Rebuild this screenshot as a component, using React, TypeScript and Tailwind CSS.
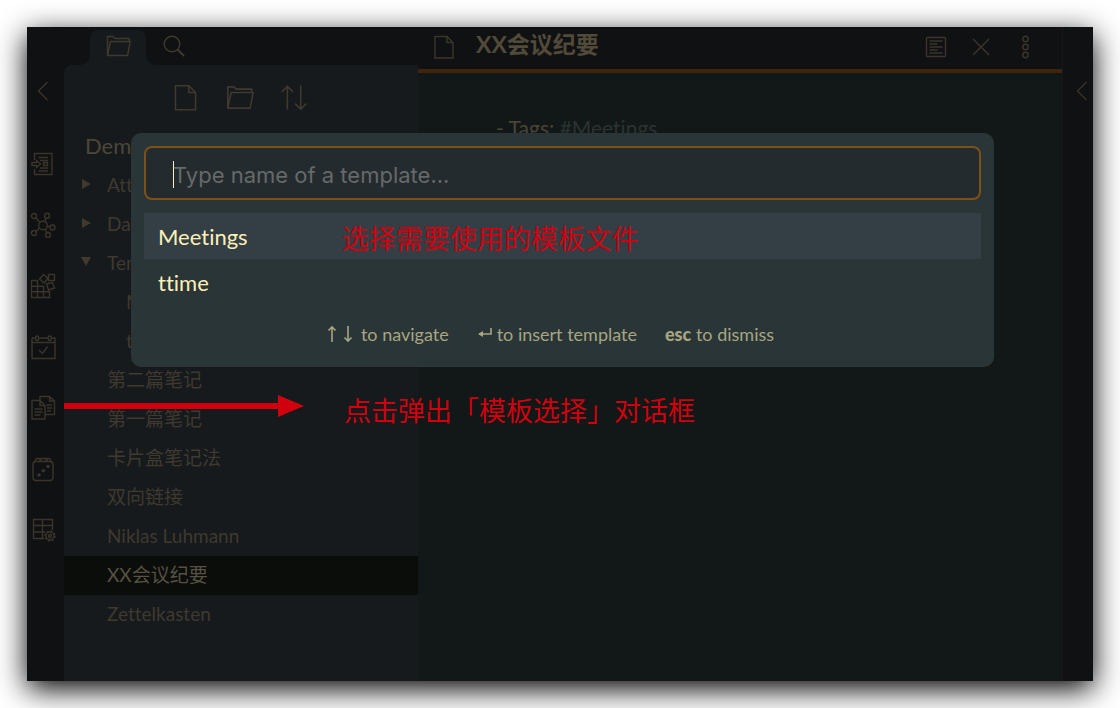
import type { ReactNode } from "react";

type IconProps = { className?: string; size?: number; children: ReactNode };

function Icon({ className = "", size = 26, children }: IconProps) {
  return (
    <svg
      aria-hidden="true"
      className={`shrink-0 ${className}`}
      width={size}
      height={size}
      viewBox="0 0 26 26"
      fill="none"
      stroke="currentColor"
      strokeWidth="1.4"
    >
      {children}
    </svg>
  );
}

const FolderPaths = () => (
  <path d="M2.500 22.500V3.500H8l2 2h14v3.500M2.500 22.500 5.500 8.500H25.300l-2.800 14H2.500Z" strokeLinejoin="round" />
);
const PagePaths = () => <path d="M4 2.500h12L22 8.500v15.500H4V2.500ZM16 2.500v6H22" />;

const ChevronIcon = () => (
  <Icon>
    <path d="M17.500 4 8.500 13l9 9" />
  </Icon>
);

const ribbonItems: { label: string; icon: ReactNode }[] = [
  {
    label: "Quick switcher",
    icon: (
      <Icon>
        <path d="M4.500 9V2.500H22v21H4.500V18M8.500 6.500h9.500M10 9.500h8M10 17h8M8.500 20h9.500" />
        <path d="M2 11.500h4.500V9.500L10.500 13l-4 3.500v-2H2v-3ZM13.500 11.500h4v3h-4z" />
      </Icon>
    ),
  },
  {
    label: "Graph view",
    icon: (
      <Icon>
        <circle cx="13" cy="13.500" r="4.300" />
        <circle cx="4" cy="4" r="2.500" />
        <circle cx="17" cy="3.700" r="2.500" />
        <circle cx="22.500" cy="15.500" r="2.500" />
        <circle cx="4" cy="21" r="2.500" />
        <circle cx="18" cy="23" r="2.500" />
        <path d="m5.800 5.800 4.200 4.700M16 6l-1.200 3.500M17.300 14.300l2.800.600M15.300 17.200l1.500 3.500M6 19.300l3.500-3" />
      </Icon>
    ),
  },
  {
    label: "Blocks",
    icon: (
      <Icon>
        <path d="M1.500 7.500h6v17h-6zM1.500 13.200h12v11.300h-12zM1.500 18.800h18v5.700h-18zM7.500 24.500v-12M13.500 24.500V13" />
        <path d="m13.500 1.500 4.500 4-4 4.500-4.500-4zM18.500 1.500h6v6h-6zM16.500 11l6-1.500 2 5.500-6 2z" />
      </Icon>
    ),
  },
  {
    label: "Daily note",
    icon: (
      <Icon>
        <path d="M2 4h3.500M9 4h9M21.500 4H25v20.500H2V4M2 8.500h23" />
        <rect x="5.500" y="2" width="3" height="4.500" rx="1.500" />
        <rect x="18.200" y="2" width="3" height="4.500" rx="1.500" />
        <path d="m9 16 3.500 3.500 5-7" />
      </Icon>
    ),
  },
  {
    label: "Insert template",
    icon: (
      <Icon>
        <path d="M10 5V1.500h9.500L24.500 6v13.500h-9M19.500 1.500V6h5M2 5.500h8l5 5V24H2V5.500ZM10 5.500v5h5" />
        <path d="M4.500 14h8M4.500 17h8M4.500 20h6M16.500 10h5.500M17 13h5M17 16h4" />
      </Icon>
    ),
  },
  {
    label: "Random note",
    icon: (
      <Icon>
        <rect x="3" y="5.500" width="20" height="19" rx="3" />
        <path d="M4 6.500 6.500 2.500h13l2.500 4" />
        <path d="M9 4h3M15 4h3" />
        <g fill="currentColor" stroke="none">
          <circle cx="18" cy="10.500" r="1.800" />
          <circle cx="13.300" cy="14.800" r="1.800" />
          <circle cx="9" cy="19" r="1.800" />
        </g>
      </Icon>
    ),
  },
  {
    label: "Table settings",
    icon: (
      <Icon>
        <path d="M14 21.500H3.500V2.500h19v10.500M3.500 8.500h19M3.500 15h12M12.500 2.500v19" />
        <circle cx="20" cy="19" r="4" />
        <circle cx="20" cy="19" r="1.500" />
        <circle cx="20" cy="19" r="5" strokeDasharray="2 1.900" />
      </Icon>
    ),
  },
];

type TreeItem = { name: string; open?: boolean; folder?: boolean; nested?: boolean; active?: boolean };

const tree: TreeItem[] = [
  { name: "Attachments", folder: true },
  { name: "Daily", folder: true },
  { name: "Templates", folder: true, open: true },
  { name: "Meetings", nested: true },
  { name: "ttime", nested: true },
  { name: "第二篇笔记" },
  { name: "第一篇笔记" },
  { name: "卡片盒笔记法" },
  { name: "双向链接" },
  { name: "Niklas Luhmann" },
  { name: "XX会议纪要", active: true },
  { name: "Zettelkasten" },
];

function Ribbon() {
  return (
    <nav aria-label="Ribbon" className="flex w-[37px] shrink-0 flex-col items-center bg-[#101113] pr-1.5 pt-[33px] text-[#3a352b]">
      <button type="button" aria-label="Collapse left sidebar" className="mb-3 flex h-[61px] items-center">
        <ChevronIcon />
      </button>
      {ribbonItems.map((item) => (
        <button key={item.label} type="button" aria-label={item.label} className="flex h-[61px] items-center">
          {item.icon}
        </button>
      ))}
    </nav>
  );
}

function Sidebar() {
  return (
    <aside className="flex w-[354px] shrink-0 flex-col bg-[#101113] text-[19px] text-[#3f392e]">
      <div className="flex items-end pl-[26px] pt-[3px]">
        <button
          type="button"
          aria-label="Files"
          className="relative flex h-[35px] w-[56px] items-center justify-center rounded-t-lg bg-[#161a1d] pb-[3px]"
        >
          <svg aria-hidden="true" className="absolute -left-3 bottom-0" width="12" height="12">
            <path d="M12 0v12H0C8 12 12 8 12 0Z" fill="#161a1d" />
          </svg>
          <svg aria-hidden="true" className="absolute -right-3 bottom-0" width="12" height="12">
            <path d="M0 0v12h12C4 12 0 8 0 0Z" fill="#161a1d" />
          </svg>
          <Icon>
            <FolderPaths />
          </Icon>
        </button>
        <button type="button" aria-label="Search" className="flex h-[35px] w-[56px] items-center justify-center pb-[3px]">
          <Icon>
            <circle cx="11" cy="11" r="7.800" />
            <path d="m16.500 16.500 6.500 6.500" strokeWidth="2" />
          </Icon>
        </button>
      </div>
      <div className="flex flex-1 flex-col rounded-tl-lg bg-[#161a1d]">
        <div className="flex h-[65px] items-center justify-center gap-[25px] pr-1">
          <button type="button" aria-label="New note">
            <Icon size={29}>
              <PagePaths />
            </Icon>
          </button>
          <button type="button" aria-label="New folder">
            <Icon size={29}>
              <FolderPaths />
            </Icon>
          </button>
          <button type="button" aria-label="Change sort order">
            <Icon size={29}>
              <path d="M7.500 24V3M2.500 8l5-5 5 5M19.500 2v21M14.500 18.500l5 5 5-5" />
            </Icon>
          </button>
        </div>
        <h2 className="h-9 pl-[21px] text-[22px] leading-8 text-[#4d4738]">Demo</h2>
        <ul>
          {tree.map((item) => (
            <li key={item.name}>
              <button
                type="button"
                className={`flex h-[39px] w-full items-center ${item.nested ? "pl-[62px]" : item.folder ? "pl-[17px]" : "pl-[43px]"} ${
                  item.active ? "bg-[#0b0d0b] text-[#575140]" : ""
                }`}
              >
                {item.folder && (
                  <svg aria-hidden="true" className="mb-1 mr-4 shrink-0" width="10" height="10" fill="currentColor">
                    {item.open ? <path d="M0 0h10L5 9Z" /> : <path d="M1 0v10l9-5Z" />}
                  </svg>
                )}
                {item.name}
              </button>
            </li>
          ))}
        </ul>
      </div>
    </aside>
  );
}

function Editor() {
  return (
    <main className="flex min-w-0 flex-1 flex-col bg-[#121817]">
      <header className="flex h-[46px] items-center border-b-4 border-[#40250c] bg-[#101113] pb-[3px] pl-[13px] pr-[23px] text-[#3a362c]">
        <Icon>
          <PagePaths />
        </Icon>
        <h1 className="mb-1 ml-[19px] flex-1 text-[23px] font-bold text-[#514a39]">XX会议纪要</h1>
        <div className="flex gap-[19px]">
          <button type="button" aria-label="Preview">
            <Icon>
              <rect x="3.500" y="3.500" width="19" height="19" rx="1" />
              <path d="M6.500 7h13M6.500 10h8M6.500 13h13M6.500 16h8M6.500 19h13" />
            </Icon>
          </button>
          <button type="button" aria-label="Close">
            <Icon>
              <path d="m5 5 16 16M21 5 5 21" />
            </Icon>
          </button>
          <button type="button" aria-label="More options">
            <Icon>
              <circle cx="12.500" cy="5" r="2.700" />
              <circle cx="12.500" cy="13" r="2.700" />
              <circle cx="12.500" cy="21" r="2.700" />
            </Icon>
          </button>
        </div>
      </header>
      <p className="pl-[78px] pt-[43px] text-[21px] leading-6 text-[#4b4535]">
        - Tags: <a href="#meetings" className="text-[#2b3331]">#Meetings</a>
      </p>
    </main>
  );
}

function TemplateDialog() {
  return (
    <div className="absolute inset-x-0 top-[106px] pl-[104px] pr-[99px]">
      <div role="dialog" aria-label="Insert template" className="rounded-[10px] bg-[#293536] px-[13px] pt-[13px]">
        <input
          type="text"
          aria-label="Template name"
          placeholder="Type name of a template..."
          className="block h-[54px] w-full rounded-lg border-2 border-[#7d5018] bg-[#232b2e] pl-[27px] pt-1 font-['Inter','Noto_Sans_CJK_SC',sans-serif] text-[22px] text-[#fdefb9] outline-none placeholder:text-[#66696a]"
        />
        <span aria-hidden="true" className="absolute left-[146px] top-[28px] h-[27px] w-px bg-[#fdefb9]" />
        <ul className="pt-[13px] text-[22px] text-[#fdefb9]">
          <li>
            <button type="button" className="relative flex h-[46px] w-full items-center bg-[#333f45] pl-[14px]">
              Meetings
              <span className="absolute left-[198px] top-[6px] text-[27px] text-[#d0000f]">选择需要使用的模板文件</span>
            </button>
          </li>
          <li>
            <button type="button" className="flex h-[46px] w-full items-center pl-[14px]">
              ttime
            </button>
          </li>
        </ul>
        <div className="flex h-[62px] items-center justify-center gap-7 pb-1 pr-6 text-[18px] text-[#a7a582]">
          <span className="flex items-center gap-2">
            <svg aria-hidden="true" width="26" height="18" fill="none" stroke="currentColor" strokeWidth="1.600">
              <path d="M5 17V2M1.500 5.500 5 2l3.500 3.500M21 1v15M17.500 12.500 21 16l3.500-3.500" />
            </svg>
            to navigate
          </span>
          <span className="flex items-center gap-1">
            <svg aria-hidden="true" width="16" height="16" fill="none" stroke="currentColor" strokeWidth="1.600">
              <path d="M14 2v6H2" />
              <path d="m1 8 5-3v6Z" fill="currentColor" stroke="none" />
            </svg>
            to insert template
          </span>
          <span>
            <strong className="font-black">esc</strong> to dismiss
          </span>
        </div>
      </div>
    </div>
  );
}

export default function App() {
  return (
    <div
      lang="zh-CN"
      className="flex min-h-screen bg-white p-[27px] font-['Lato','Noto_Sans_CJK_SC',sans-serif] [font-variant-ligatures:none]"
    >
      <div className="relative flex flex-1 shadow-[0_8px_28px_#000]">
        <Ribbon />
        <Sidebar />
        <Editor />
        <aside className="flex w-[31px] shrink-0 flex-col items-end border-l border-[#191617] bg-[#101113] pt-[51px] text-[#37332a]">
          <button type="button" aria-label="Expand right sidebar" className="-mr-0.5">
            <ChevronIcon />
          </button>
        </aside>
        <TemplateDialog />
        <div className="absolute left-[37px] top-[364px] flex items-start gap-10 text-[27px] text-[#d0000f]">
          <svg aria-hidden="true" width="240" height="32">
            <path d="M0 12h214V4l26 11-26 11v-8H0Z" fill="currentColor" />
          </svg>
          <span>点击弹出「模板选择」对话框</span>
        </div>
      </div>
    </div>
  );
}
